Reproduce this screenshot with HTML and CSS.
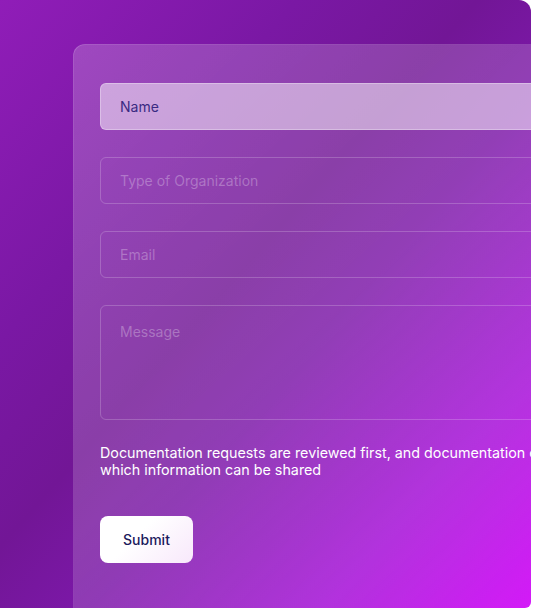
FILE: index.html
```html
<!DOCTYPE html>
<html lang="en">
<head>
    <meta charset="UTF-8">
    <meta name="viewport" content="width=device-width, initial-scale=1.0">
    <title>Contact</title>
    <link rel="stylesheet" href="styles.css">
</head>
<body>

    <div class="frame">
        <form class="card">
            <input class="field filled" type="text" placeholder="Name">
            <input class="field" type="text" placeholder="Type of Organization">
            <input class="field" type="email" placeholder="Email">
            <textarea class="field message" placeholder="Message"></textarea>

            <p class="note">
                Documentation requests are reviewed first, and documentation of each request decides<br>
                which information can be shared
            </p>

            <button class="submit-button" type="button">Submit</button>
        </form>
    </div>

</body>
</html>
```

FILE: styles.css
```css
body {
    margin: 0;
    padding: 0;
    background: #ffffff;
    font-family: 'Inter', 'Noto Sans', sans-serif;
}

.frame {
    width: 531px;
    height: 608px;
    box-sizing: border-box;
    padding: 44px 0 0 73px;
    overflow: hidden;
    border-radius: 0 12px 6px 0;
    background: linear-gradient(to bottom right, #901db8 0%, #7a18a4 28%, #721696 45%, #7c18a8 58%, #a81ad8 80%, #d20ef8 100%);
}

.card {
    width: 700px;
    min-height: 620px;
    box-sizing: border-box;
    padding: 38px 26px;
    display: flex;
    flex-direction: column;
    gap: 27px;
    background: linear-gradient(to bottom right, rgba(255, 255, 255, 0.2), rgba(255, 255, 255, 0.17) 40%, rgba(255, 255, 255, 0.1) 65%, rgba(255, 255, 255, 0.02) 85%);
    border: 1px solid rgba(255, 255, 255, 0.16);
    border-radius: 12px;
}

.field {
    display: block;
    width: 100%;
    height: 47px;
    box-sizing: border-box;
    padding: 0 19px;
    font-family: inherit;
    font-size: 14px;
    color: #ffffff;
    background: transparent;
    border: 1px solid rgba(255, 255, 255, 0.2);
    border-radius: 6px;
    outline: none;
    margin: 0;
}

.field::placeholder {
    color: rgba(255, 255, 255, 0.28);
}

.field.filled {
    background: rgba(255, 255, 255, 0.5);
    border-color: rgba(255, 255, 255, 0.3);
}

.field.filled::placeholder {
    color: #3a2a82;
}

.message {
    height: 115px;
    padding-top: 17px;
    resize: none;
}

.note {
    margin: -3px 0 11px;
    font-size: 14.3px;
    line-height: 17px;
    color: #ffffff;
    white-space: nowrap;
}

.submit-button {
    align-self: flex-start;
    width: 93px;
    height: 47px;
    font-family: inherit;
    font-size: 14px;
    font-weight: 500;
    color: #1c1a5c;
    background: linear-gradient(135deg, #ffffff 40%, #f8e8fb);
    border: none;
    border-radius: 8px;
    cursor: pointer;
}
```
